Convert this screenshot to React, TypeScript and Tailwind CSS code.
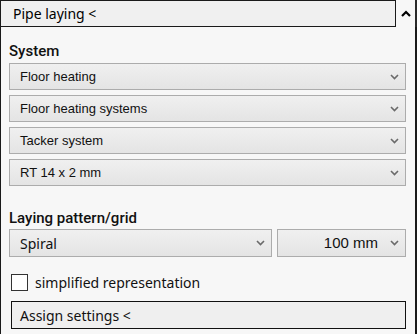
import React from "react";

const UI = '"Noto Sans", "Open Sans", sans-serif';
const LABEL = 'Roboto, "Noto Sans", sans-serif';
const ARIAL = '"Liberation Sans", Arial, sans-serif';

function Chevron() {
  return (
    <svg width="9" height="6" viewBox="0 0 9 6" className="shrink-0">
      <polyline points="1,1 4.5,4.5 8,1" fill="none" stroke="#6a6a6a" strokeWidth="1.6" />
    </svg>
  );
}

function Select({ label, className = "", align = "left", font = ARIAL, size = "text-[13px]" }: { label: string; className?: string; align?: "left" | "right"; font?: string; size?: string }) {
  return (
    <div
      className={`h-[27px] border border-[#acacac] bg-gradient-to-b from-[#f0f0f0] to-[#e4e4e4] flex items-center pr-[6px] ${className}`}
    >
      <span
        className={`flex-1 ${size} text-[#111] ${align === "right" ? "text-right pr-[12px]" : "pl-[10px]"}`}
        style={{ fontFamily: font }}
      >
        {label}
      </span>
      <Chevron />
    </div>
  );
}

export default function App() {
  return (
    <div className="w-[417px] h-[334px] bg-[#f7f7f7] flex flex-col" style={{ fontFamily: UI }}>
      <div className="flex h-[27px] shrink-0">
        <div className="w-[396px] h-[27px] border border-[#1a1a1a] bg-[#f0f0f0] flex items-center pl-[12px]">
          <span className="text-[14px] text-black" style={{ fontFamily: UI }}>Pipe laying &lt;</span>
        </div>
        <div className="flex-1 border-r-2 border-[#2a2a2a] flex justify-center pt-[10px]">
          <svg width="10" height="7" viewBox="0 0 10 7">
            <polyline points="1,6 5,2 9,6" fill="none" stroke="#000" strokeWidth="2.2" />
          </svg>
        </div>
      </div>
      <div className="flex-1 border-l border-r-2 border-[#1a1a1a] pl-[8px] pr-[9px] flex flex-col">
        <div className="mt-[14px] h-[20px] text-[15px] leading-[20px] font-medium text-[#111]" style={{ fontFamily: LABEL }}>System</div>
        <div className="mt-[2px] flex flex-col gap-[5px]">
          <Select label="Floor heating" />
          <Select label="Floor heating systems" />
          <Select label="Tacker system" />
          <Select label="RT 14 x 2 mm" />
        </div>
        <div className="mt-[22px] h-[20px] text-[15px] leading-[20px] font-medium text-[#111]" style={{ fontFamily: LABEL }}>Laying pattern/grid</div>
        <div className="mt-[1px] flex gap-[5px]">
          <Select label="Spiral" className="w-[263px] h-[28px]" font={UI} size="text-[14px]" />
          <Select label="100 mm" className="flex-1 h-[28px]" align="right" size="text-[15px]" />
        </div>
        <div className="mt-[15px] flex items-center ml-[2px]">
          <div className="w-[17px] h-[17px] border border-[#333] bg-white" />
          <span className="ml-[7px] text-[14px] text-[#111]">simplified representation</span>
        </div>
        <div className="mt-[8px] ml-[2px] h-[28px] border border-[#111] bg-[#efefef] flex items-center pl-[8px]">
          <span className="text-[14px] text-[#111]">Assign settings &lt;</span>
        </div>
      </div>
    </div>
  );
}
